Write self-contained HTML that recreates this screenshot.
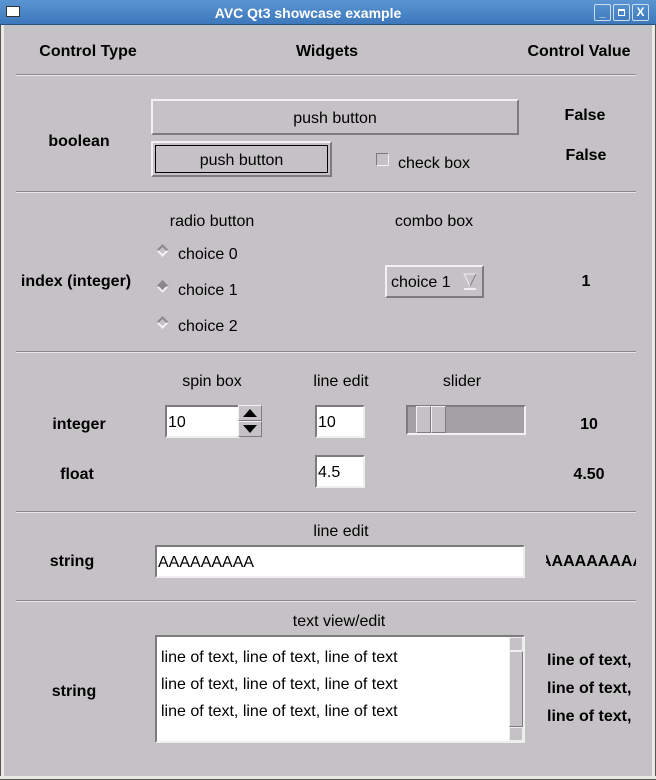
<!DOCTYPE html>
<html><head><style>
*{margin:0;padding:0;box-sizing:border-box}
body{width:656px;height:780px;background:#c5c2c5;font-family:"Liberation Sans",sans-serif;font-size:16px;color:#000;position:relative;overflow:hidden}
.a{position:absolute;white-space:nowrap}
.c{transform:translate(-50%,-38%)}
.b{font-weight:bold}
.hr{position:absolute;left:16px;width:620px;height:2px;border-top:1px solid #8a878a;border-bottom:1px solid #e8e6e8}
.btn{position:absolute;background:#c5c2c5;border:2px solid;border-color:#f2f0f2 #7e7b7e #7e7b7e #f2f0f2;display:flex;align-items:center;justify-content:center;padding-top:3px}
.in{position:absolute;background:#fff;border:2px solid;border-color:#7e7b7e #eeeeee #eeeeee #7e7b7e;padding-left:1px;padding-top:3px;display:flex;align-items:center}
.dia{position:absolute;width:9px;height:9px;transform:rotate(45deg);border:2px solid;border-color:#8a878a #f2f0f2 #f2f0f2 #8a878a;background:#c5c2c5}
</style></head><body>
<div class="a" style="left:0;top:0;width:656px;height:25px;background:linear-gradient(#5a95d2,#3d78bc);border-bottom:1px solid #25507f"></div>
<div class="a" style="left:6px;top:6px;width:14px;height:11px;background:#fff;border:1px solid #333"></div>
<div class="a c" style="left:308px;top:11px;color:#fff;font-weight:bold;font-size:14px">AVC Qt3 showcase example</div>
<div class="a" style="left:594px;top:4px;width:17px;height:17px;border:1px solid #cde;border-radius:2px;color:#fff;font-size:11px;text-align:center;line-height:16px;font-weight:bold">_</div>
<div class="a" style="left:613px;top:4px;width:17px;height:17px;border:1px solid #cde;border-radius:2px"><div style="margin:4px;width:7px;height:7px;border:1px solid #fff;border-top-width:2px"></div></div>
<div class="a" style="left:632px;top:4px;width:17px;height:17px;border:1px solid #cde;border-radius:2px;color:#fff;font-size:12px;text-align:center;line-height:15px;font-weight:bold">X</div>
<div class="a" style="left:0;top:25px;width:4px;height:755px;background:#eceae6;border-left:1px solid #555"></div>
<div class="a" style="right:0;top:25px;width:4px;height:755px;background:#eceae6;border-right:1px solid #555"></div>
<div class="a" style="left:0;bottom:0;width:656px;height:4px;background:#eceae6;border-bottom:1px solid #555"></div>

<div class="a c b" style="left:88px;top:50px">Control Type</div>
<div class="a c b" style="left:327px;top:50px">Widgets</div>
<div class="a c b" style="left:579px;top:50px">Control Value</div>
<div class="hr" style="top:74px"></div>

<div class="a c b" style="left:79px;top:140px">boolean</div>
<div class="btn" style="left:151px;top:99px;width:368px;height:36px">push button</div>
<div class="btn" style="left:151px;top:141px;width:181px;height:36px"><div style="position:absolute;left:2px;top:2px;right:2px;bottom:2px;border:1px solid #000"></div>push button</div>
<div class="a" style="left:376px;top:153px;width:13px;height:13px;border:1px solid;border-color:#7e7b7e #f2f0f2 #f2f0f2 #7e7b7e;background:#c5c2c5"></div>
<div class="a" style="left:398px;top:155px">check box</div>
<div class="a c b" style="left:585px;top:114px">False</div>
<div class="a c b" style="left:586px;top:154px">False</div>
<div class="hr" style="top:191px"></div>

<div class="a c" style="left:212px;top:220px">radio button</div>
<div class="a c" style="left:434px;top:220px">combo box</div>
<div class="a c b" style="left:76px;top:280px">index (integer)</div>
<div class="dia" style="left:158px;top:246px"></div><div class="a" style="left:178px;top:246px">choice 0</div>
<div class="dia" style="left:158px;top:282px;background:#8a878a"></div><div class="a" style="left:178px;top:282px">choice 1</div>
<div class="dia" style="left:158px;top:318px"></div><div class="a" style="left:178px;top:318px">choice 2</div>
<div class="btn" style="left:385px;top:265px;width:99px;height:33px;justify-content:flex-start;padding-left:4px">choice 1
<svg style="position:absolute;right:4px;top:5px" width="16" height="20"><path d="M2 2H14L8 14Z" fill="none" stroke="#eee"/><path d="M2 17H14" stroke="#eee" stroke-width="2"/><path d="M14 2L8 14" stroke="#7e7b7e"/></svg></div>
<div class="a c b" style="left:586px;top:280px">1</div>
<div class="hr" style="top:351px"></div>

<div class="a c" style="left:212px;top:380px">spin box</div>
<div class="a c" style="left:341px;top:380px">line edit</div>
<div class="a c" style="left:462px;top:380px">slider</div>
<div class="a c b" style="left:79px;top:423px">integer</div>
<div class="a c b" style="left:77px;top:473px">float</div>
<div class="in" style="left:165px;top:405px;width:75px;height:33px">10</div>
<div class="a" style="left:238px;top:405px;width:24px;height:32px;background:#c5c2c5">
<div style="height:16px;border:1px solid;border-color:#f2f0f2 #7e7b7e #7e7b7e #f2f0f2"><svg width="22" height="14"><path d="M4 11L11 3L18 11Z"/></svg></div>
<div style="height:16px;border:1px solid;border-color:#f2f0f2 #7e7b7e #7e7b7e #f2f0f2"><svg width="22" height="14"><path d="M4 3L11 11L18 3Z"/></svg></div></div>
<div class="in" style="left:315px;top:405px;width:50px;height:33px">10</div>
<div class="in" style="left:315px;top:455px;width:50px;height:33px">4.5</div>
<div class="a" style="left:406px;top:405px;width:120px;height:30px;background:#a4a1a4;border:2px solid;border-color:#7e7b7e #f2f0f2 #f2f0f2 #7e7b7e"></div>
<div class="a" style="left:416px;top:406px;width:15px;height:27px;background:#c5c2c5;border:1px solid;border-color:#f2f0f2 #7e7b7e #7e7b7e #f2f0f2"></div>
<div class="a" style="left:431px;top:406px;width:15px;height:27px;background:#c5c2c5;border:1px solid;border-color:#f2f0f2 #7e7b7e #7e7b7e #f2f0f2"></div>
<div class="a c b" style="left:589px;top:423px">10</div>
<div class="a c b" style="left:589px;top:473px">4.50</div>
<div class="hr" style="top:511px"></div>

<div class="a c" style="left:341px;top:530px">line edit</div>
<div class="a c b" style="left:72px;top:560px">string</div>
<div class="in" style="left:155px;top:545px;width:370px;height:33px">AAAAAAAAA</div>
<div class="a b" style="left:546px;top:553px;width:90px;overflow:hidden;direction:rtl;text-align:center"><span style="margin-right:-8px">AAAAAAAAA</span></div>
<div class="hr" style="top:600px"></div>

<div class="a c" style="left:339px;top:620px">text view/edit</div>
<div class="a c b" style="left:74px;top:690px">string</div>
<div class="a" style="left:155px;top:635px;width:370px;height:108px;background:#fff;border:2px solid;border-color:#7e7b7e #eee #eee #7e7b7e;padding:7px 0 0 4px;line-height:27px">line of text, line of text, line of text<br>line of text, line of text, line of text<br>line of text, line of text, line of text</div>
<div class="a" style="left:509px;top:637px;width:14px;height:104px;background:#a4a1a4">
<div style="height:14px;background:#c5c2c5;border:1px solid #eee"></div>
<div style="height:76px;background:#c5c2c5;border:1px solid;border-color:#f2f0f2 #7e7b7e #7e7b7e #f2f0f2"></div>
<div style="height:14px;background:#c5c2c5;border:1px solid #eee"></div></div>
<div class="a b" style="left:547px;top:647px;line-height:28px;width:89px;overflow:hidden">line of text,<br>line of text,<br>line of text,</div>
</body></html>
